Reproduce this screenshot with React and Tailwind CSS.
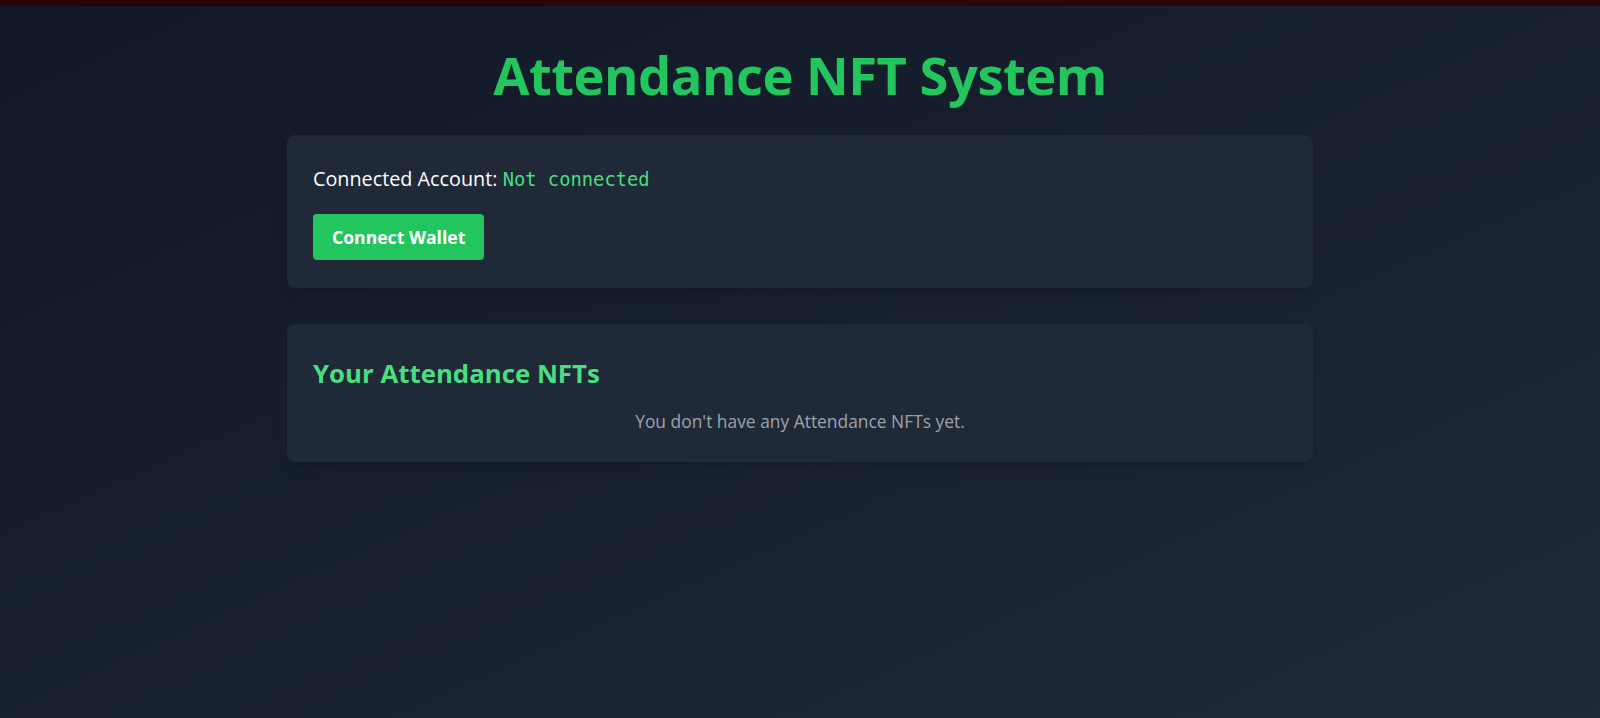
import React from 'react';

function App() {
  const account = null;

  return (
    <div className="min-h-screen bg-gradient-to-br from-[#111827] to-[#1f2937] font-['Open_Sans',sans-serif] text-white">
      <div className="h-[6px] bg-[#2a0409]" />
      <div className="max-w-[1026px] mx-auto pt-[42px]">
        <h1 className="text-center text-[52.5px] leading-[54px] tracking-[-0.5px] font-bold text-[#22c55e]">
          Attendance NFT System
        </h1>

        <div className="mt-[33px] bg-[#1f2937] rounded-lg shadow-lg px-[26px] pt-[29px] pb-[28px]">
          <p className="text-[19.8px] leading-[30px] text-white">
            Connected Account:{' '}
            <span className="font-['DejaVu_Sans_Mono',monospace] text-[18.8px] text-[#4ade80]">
              {account ? account : 'Not connected'}
            </span>
          </p>
          <button className="mt-[19px] bg-[#22c55e] hover:bg-green-600 text-white font-bold text-[17.6px] leading-[26px] px-[19px] py-[10px] rounded-[4px]">
            Connect Wallet
          </button>
        </div>

        <div className="mt-[36px] bg-[#1f2937] rounded-lg shadow-lg px-[26px] pt-[31px] pb-[28px]">
          <h2 className="text-[25.8px] leading-[36px] font-bold text-[#4ade80]">
            Your Attendance NFTs
          </h2>
          <p className="mt-[17px] text-center text-[17.4px] leading-[26px] text-[#9ca3af]">
            You don't have any Attendance NFTs yet.
          </p>
        </div>
      </div>
    </div>
  );
}

export default App;
